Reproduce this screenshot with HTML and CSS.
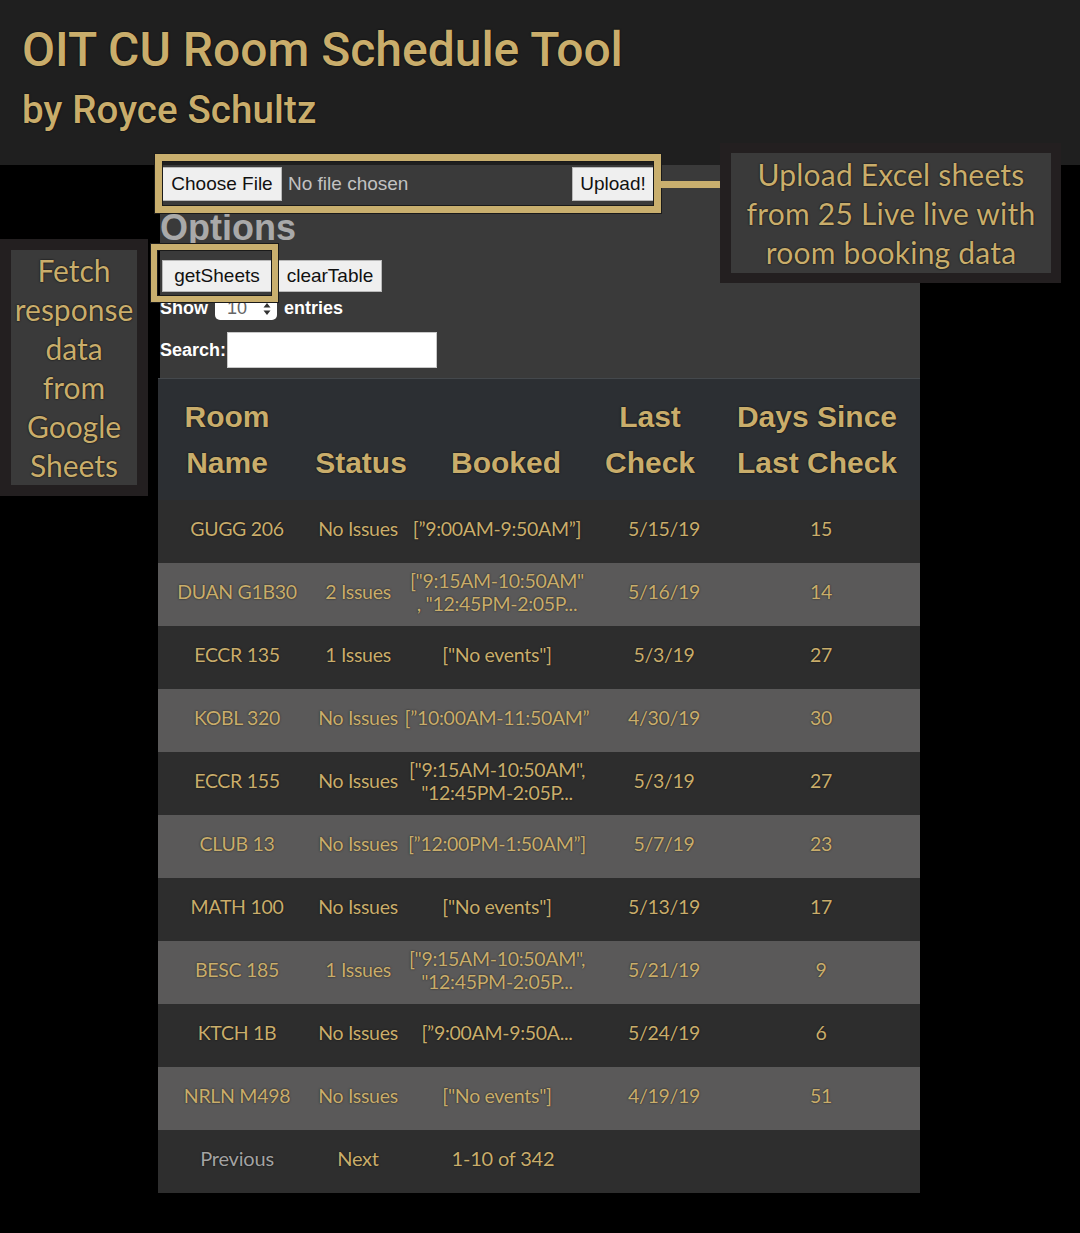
FILE: index.html
```html
<!DOCTYPE html>
<html lang="en">
<head>
<meta charset="utf-8">
<title>OIT CU Room Schedule Tool</title>
<link rel="stylesheet" href="styles.css">
</head>
<body>
<header class="top">
  <h1 class="title">OIT CU Room Schedule Tool</h1>
  <p class="subtitle">by Royce Schultz</p>
</header>

<main class="panel">
  <form class="upload">
    <button class="btn btn-file" type="button">Choose File</button>
    <span class="nofile">No file chosen</span>
    <button class="btn btn-upload" type="button">Upload!</button>
  </form>

  <h2 class="options">Options</h2>

  <div class="actions">
    <button class="btn btn-get" type="button">getSheets</button>
    <button class="btn btn-clear" type="button">clearTable</button>
  </div>

  <div class="length">
    <span>Show</span>
    <span class="select">10
      <svg class="arrows" width="8" height="14" viewBox="0 0 8 14"><path d="M4 1 L7.5 5.5 H0.5 Z M4 13 L7.5 8.5 H0.5 Z" fill="#333"/></svg>
    </span>
    <span>entries</span>
  </div>

  <div class="search">
    <label>Search:</label>
    <span class="input"></span>
  </div>

  <div class="table">
    <div class="thead">
      <div class="th">Room<br>Name</div>
      <div class="th">Status</div>
      <div class="th">Booked</div>
      <div class="th">Last<br>Check</div>
      <div class="th">Days Since<br>Last Check</div>
    </div>

    <div class="row odd"><span>GUGG 206</span><span>No Issues</span><span>[”9:00AM-9:50AM”]</span><span>5/15/19</span><span>15</span></div>
    <div class="row even"><span>DUAN G1B30</span><span>2 Issues</span><span>["9:15AM-10:50AM"<br>, "12:45PM-2:05P...</span><span>5/16/19</span><span>14</span></div>
    <div class="row odd"><span>ECCR 135</span><span>1 Issues</span><span>["No events"]</span><span>5/3/19</span><span>27</span></div>
    <div class="row even"><span>KOBL 320</span><span>No Issues</span><span>[”10:00AM-11:50AM”</span><span>4/30/19</span><span>30</span></div>
    <div class="row odd"><span>ECCR 155</span><span>No Issues</span><span>["9:15AM-10:50AM",<br>"12:45PM-2:05P...</span><span>5/3/19</span><span>27</span></div>
    <div class="row even"><span>CLUB 13</span><span>No Issues</span><span>[”12:00PM-1:50AM”]</span><span>5/7/19</span><span>23</span></div>
    <div class="row odd"><span>MATH 100</span><span>No Issues</span><span>["No events"]</span><span>5/13/19</span><span>17</span></div>
    <div class="row even"><span>BESC 185</span><span>1 Issues</span><span>["9:15AM-10:50AM",<br>"12:45PM-2:05P...</span><span>5/21/19</span><span>9</span></div>
    <div class="row odd"><span>KTCH 1B</span><span>No Issues</span><span>[”9:00AM-9:50A...</span><span>5/24/19</span><span>6</span></div>
    <div class="row even"><span>NRLN M498</span><span>No Issues</span><span>["No events"]</span><span>4/19/19</span><span>51</span></div>

    <div class="pager">
      <span class="prev">Previous</span>
      <span class="next">Next</span>
      <span class="count">1-10 of 342</span>
    </div>
  </div>
</main>

<div class="hl hl-upload"></div>
<div class="hl-link"></div>
<div class="hl hl-sheets"></div>

<div class="note note-upload">Upload Excel sheets<br>from 25 Live live with<br>room booking data</div>
<div class="note note-fetch">Fetch<br>response<br>data<br>from<br>Google<br>Sheets</div>
</body>
</html>
```

FILE: styles.css
```css
* { box-sizing: border-box; }

body {
  margin: 0;
  width: 1080px;
  min-height: 1233px;
  background: #000;
  position: relative;
  font-family: "Liberation Sans", Arial, sans-serif;
}

/* header */
.top {
  height: 165px;
  background: #1f1f1f;
  padding: 26px 0 0 22px;
}
.title {
  margin: 0;
  font: 500 48px/48px Roboto, "Liberation Sans", sans-serif;
  color: #c9ad6b;
  text-shadow: 0 0 2px #000;
}
.subtitle {
  margin: 17px 0 0;
  font: 500 38.5px/38px Roboto, "Liberation Sans", sans-serif;
  letter-spacing: 0.1px;
  color: #c9ad6b;
  text-shadow: 0 0 2px #000;
}

/* main panel */
.panel {
  margin-left: 160px;
  width: 760px;
  background: #3a3a3a;
}

.btn {
  height: 34px;
  padding: 0;
  margin: 0;
  background: #efefef;
  border: 1px solid #b8b8b8;
  color: #111;
  font: 19px "Liberation Sans", Arial, sans-serif;
  text-align: center;
}

.upload {
  display: flex;
  align-items: center;
  width: 494px;
  height: 36px;
  padding: 1px 0 0 2px;
  margin: 0;
}
.btn-file { width: 120px; }
.nofile {
  margin-left: 6px;
  color: #c2c2c2;
  font-size: 19px;
}
.btn-upload { width: 82px; margin-left: auto; }

.options {
  margin: 7px 0 0;
  font: bold 36px/40px "Liberation Sans", Arial, sans-serif;
  color: #a9a9a9;
}

.actions {
  display: flex;
  gap: 6px;
  margin-top: 12px;
  padding-left: 2px;
}
.actions .btn { height: 32px; }
.btn-get { width: 110px; }
.btn-clear { width: 104px; }

.length {
  display: flex;
  align-items: center;
  gap: 7px;
  height: 23px;
  margin-top: 5px;
  color: #fff;
  font: bold 18px "Liberation Sans", Arial, sans-serif;
}
.select {
  display: inline-flex;
  align-items: center;
  justify-content: space-between;
  width: 62px;
  height: 23px;
  padding: 0 6px 0 12px;
  background: #fff;
  border-radius: 5px;
  color: #666;
  font-weight: normal;
  font-size: 18px;
}

.search {
  display: flex;
  align-items: center;
  height: 36px;
  margin-top: 12px;
  color: #fff;
  font: bold 18px "Liberation Sans", Arial, sans-serif;
}
.input {
  width: 210px;
  height: 36px;
  margin-left: 1px;
  background: #fff;
  border: 1px solid #c8c8c8;
}

/* table */
.table {
  margin-top: 10px;
  margin-left: -2px;
  width: 762px;
}
.thead {
  display: grid;
  grid-template-columns: 138px 130px 160px 128px 206px;
  height: 122px;
  padding: 15px 0 14px;
  background: #2c2f33;
  border-top: 1px solid #44484c;
}
.th {
  align-self: end;
  text-align: center;
  color: #c9ad6b;
  font: bold 30px/46px "Liberation Sans", Arial, sans-serif;
  text-shadow: 0 0 2px #000;
  white-space: nowrap;
}

.row, .pager {
  display: grid;
  grid-template-columns: 158px 84px 194px 140px 174px;
  align-items: center;
  height: 63px;
  padding-bottom: 6px;
  color: #c9ad6b;
  font: 19.5px/23px Lato, "Open Sans", sans-serif;
  letter-spacing: -0.3px;
  text-align: center;
  text-shadow: 0 0 2px rgba(0, 0, 0, 0.7);
}
.row span, .pager span { white-space: nowrap; justify-self: center; }
.odd { background: #2d2d2d; }
.even { background: #5a5959; }

.pager { background: #2e2e2e; font-size: 20px; letter-spacing: -0.2px; }
.prev { color: #a3a3a3; }
.count { position: relative; left: 6px; }

/* annotation overlays */
.hl {
  position: absolute;
  border: 7px solid #c9af6e;
  box-shadow: 0 0 0 1px #1a1a1a, inset 0 0 0 1px #1a1a1a;
}
.hl-upload { left: 155px; top: 154px; width: 506px; height: 59px; }
.hl-sheets { left: 151px; top: 244px; width: 127px; height: 58px; border-width: 6px; }
.hl-link {
  position: absolute;
  left: 661px;
  top: 181px;
  width: 60px;
  height: 7px;
  background: #c9af6e;
}

.note {
  position: absolute;
  background: #3a3a3a;
  border: 10px solid #231f20;
  color: #c9ad6b;
  text-align: center;
  font: 30px/39px Lato, "Open Sans", sans-serif;
  text-shadow: 0 0 2px #000;
  white-space: nowrap;
}
.note-upload {
  left: 720px;
  top: 143px;
  width: 341px;
  height: 140px;
  border-left-width: 11px;
  padding-top: 2px;
  letter-spacing: 0.2px;
}
.note-fetch {
  left: 0;
  top: 239px;
  width: 148px;
  height: 257px;
  border-width: 11px;
  padding-top: 1px;
}
```
